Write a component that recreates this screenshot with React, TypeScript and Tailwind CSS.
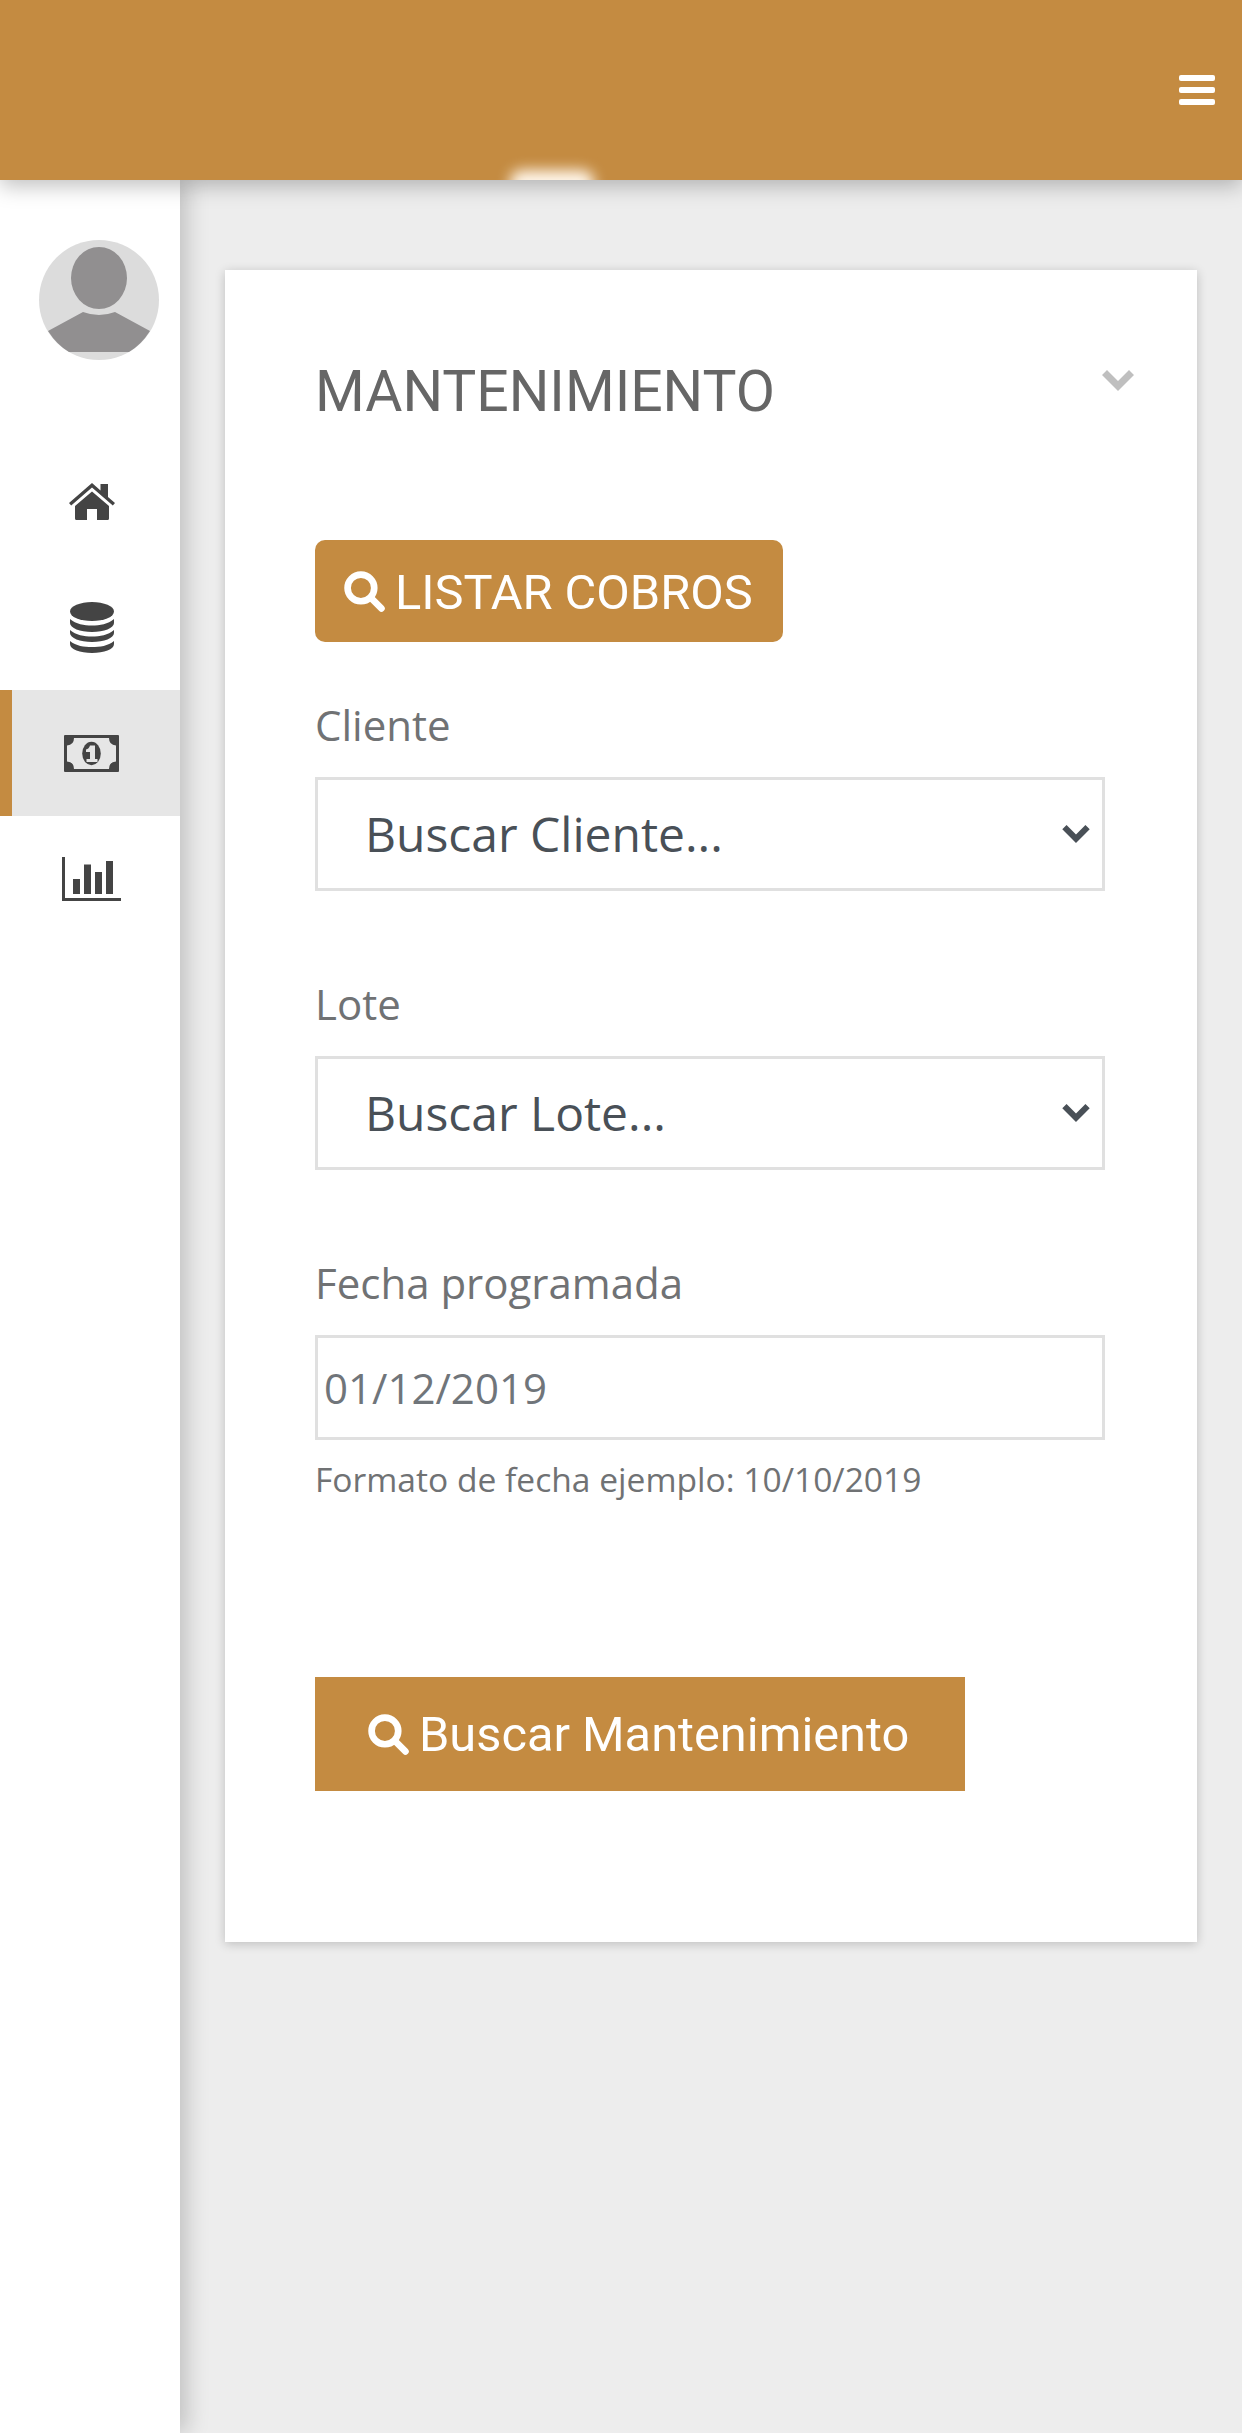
import React from "react";

function SearchIcon({ className }: { className?: string }) {
  return (
    <svg viewBox="0 0 40 40" className={className} fill="none" stroke="currentColor" strokeWidth="6.5" strokeLinecap="round">
      <circle cx="16.5" cy="16.5" r="13" />
      <path d="M26.5 26.5 L36.5 36.5" />
    </svg>
  );
}

function Chevron({ className }: { className?: string }) {
  return (
    <svg viewBox="0 0 32 21" className={className} fill="currentColor">
      <path d="M5 0 L16 11 L27 0 L32 5 L16 21 L0 5 Z" />
    </svg>
  );
}

function HomeIcon() {
  return (
    <svg viewBox="0 0 46 37" className="w-[46px] h-[37px] text-[#444444]" fill="currentColor">
      <path d="M23 0 L31.5 7.5 V1 H39 V14 L46 20 L43.8 22.5 L23 4.6 L2.2 22.5 L0 20 Z" />
      <path d="M23 8.5 L40 23 V35.5 Q40 37 38.5 37 H28 V26 H18 V37 H7.5 Q6 37 6 35.5 V23 Z" />
    </svg>
  );
}

function DbIcon() {
  return (
    <svg viewBox="0 0 44 51" className="w-[44px] h-[51px] text-[#444444]" fill="currentColor">
      <ellipse cx="22" cy="9.5" rx="22" ry="9.5" />
      <path d="M0 17 C6 22 14 23.5 22 23.5 C30 23.5 38 22 44 17 V21 C44 26 34 30 22 30 C10 30 0 26 0 21 Z" />
      <path d="M0 28 C6 33 14 34.5 22 34.5 C30 34.5 38 33 44 28 V31 C44 36 34 40 22 40 C10 40 0 36 0 31 Z" />
      <path d="M0 39 C6 44 14 45 22 45 C30 45 38 44 44 39 V42 C44 47.5 34 51 22 51 C10 51 0 47.5 0 42 Z" />
    </svg>
  );
}

function MoneyIcon() {
  return (
    <svg viewBox="0 0 55 37" className="w-[55px] h-[37px] text-[#444444]" fill="currentColor">
      <path
        fillRule="evenodd"
        d="M1 0 H54 Q55 0 55 1 V36 Q55 37 54 37 H1 Q0 37 0 36 V1 Q0 0 1 0 Z M10 3 Q10 10 3 10.5 V26.5 Q10 27 10 34 H45 Q45 27 52 26.5 V10.5 Q45 10 45 3 Z"
      />
      <ellipse cx="27.5" cy="18.5" rx="9.3" ry="11.7" />
      <path
        d="M26 10.5 H31 V24 H33.5 V27 H22.5 V24 H26 V17 H22 V14.5 Q25 14 26 10.5 Z"
        fill="#e6e6e6"
      />
    </svg>
  );
}

function ChartIcon() {
  return (
    <svg viewBox="0 0 59 44" className="w-[59px] h-[44px] text-[#444444]" fill="currentColor">
      <path d="M0 0 H3 V41 H59 V44 H0 Z" />
      <rect x="11" y="22" width="7" height="15" />
      <rect x="22" y="7.5" width="7" height="29.5" />
      <rect x="33" y="15" width="7" height="22" />
      <rect x="44" y="4" width="7" height="33" />
    </svg>
  );
}

function Avatar() {
  return (
    <svg viewBox="0 0 120 120" className="w-[120px] h-[120px]">
      <circle cx="60" cy="60" r="60" fill="#dcdcdc" />
      <ellipse cx="60" cy="38" rx="28" ry="31" fill="#918f90" />
      <path d="M44 72 Q60 78 76 72 L111 91 Q102 105 90 112 H30 Q18 105 9 91 Z" fill="#918f90" />
    </svg>
  );
}

function NavItem({ active, children }: { active?: boolean; children: React.ReactNode }) {
  return (
    <div
      className={
        active
          ? "h-[126px] flex items-center justify-center bg-[#e6e6e6] border-l-[12px] border-[#c48b41] pr-[9px]"
          : "h-[126px] flex items-center justify-center pl-[3px]"
      }
    >
      {children}
    </div>
  );
}

function SelectField({ label, placeholder }: { label: string; placeholder: string }) {
  return (
    <div className="mb-[84px]">
      <label className="block text-[42px] leading-[58px] text-[#707274] mb-[23px]">{label}</label>
      <div className="relative w-[790px]">
        <select className="appearance-none block w-full h-[114px] bg-white border-[3px] border-[#e0e0e0] pl-[47px] text-[48px] text-[#495057] outline-none rounded-none">
          <option>{placeholder}</option>
        </select>
        <Chevron className="absolute right-[15px] top-[48px] w-[28px] h-[18px] text-[#495057]" />
      </div>
    </div>
  );
}

export default function App() {
  return (
    <div className="min-h-[2433px] flex flex-col bg-[#ededed] font-['Open_Sans',sans-serif] overflow-hidden">
      <header className="relative z-20 h-[180px] shrink-0 bg-[#c48b41] shadow-[0_6px_20px_rgba(0,0,0,0.25)] flex items-center justify-end pr-[27px]">
        <div className="absolute inset-0 overflow-hidden">
          <div className="absolute left-[510px] top-[170px] w-[84px] h-[30px] rounded-[12px] bg-[#fff6ea] blur-[7px]" />
        </div>
        <div className="relative flex flex-col gap-[6px] w-[36px]">
          <span className="h-[6px] rounded-[2px] bg-white" />
          <span className="h-[6px] rounded-[2px] bg-white" />
          <span className="h-[6px] rounded-[2px] bg-white" />
        </div>
      </header>
      <div className="flex flex-1">
        <aside className="relative z-10 w-[180px] shrink-0 bg-white shadow-[6px_0_22px_rgba(0,0,0,0.2)] pt-[60px]">
          <div className="pl-[39px] mb-[78px]">
            <Avatar />
          </div>
          <nav>
            <NavItem><HomeIcon /></NavItem>
            <NavItem><DbIcon /></NavItem>
            <NavItem active><MoneyIcon /></NavItem>
            <NavItem><ChartIcon /></NavItem>
          </nav>
        </aside>
        <main className="flex-1 pl-[45px] pr-[45px] pt-[90px]">
          <section className="relative bg-white h-[1672px] pl-[90px] pt-[90px] shadow-[0_2px_10px_rgba(0,0,0,0.2)]">
            <Chevron className="absolute right-[63px] top-[100px] w-[32px] h-[21px] text-[#bfbfbf]" />
            <h1 className="font-['Roboto',sans-serif] text-[57px] leading-[64px] text-[#666666] mb-[116px]">MANTENIMIENTO</h1>
            <button className="flex items-center h-[102px] w-[468px] pl-[29px] bg-[#c48b41] rounded-[10px] text-white font-['Roboto',sans-serif] text-[48.75px] mb-[54px]">
              <SearchIcon className="w-[41px] h-[41px] mr-[10px]" />
              <span className="pt-[3px]">LISTAR COBROS</span>
            </button>
            <SelectField label="Cliente" placeholder="Buscar Cliente..." />
            <SelectField label="Lote" placeholder="Buscar Lote..." />
            <div className="mb-[173px]">
              <label className="block text-[42px] leading-[58px] text-[#707274] mb-[23px]">Fecha programada</label>
              <input
                readOnly
                value="01/12/2019"
                className="block w-[790px] h-[105px] bg-white border-[3px] border-[#e0e0e0] pl-[6px] text-[42px] text-[#70757a] outline-none"
              />
              <p className="mt-[14px] text-[33.6px] leading-[50px] text-[#707274]">Formato de fecha ejemplo: 10/10/2019</p>
            </div>
            <button className="flex items-center h-[114px] w-[650px] pl-[53px] bg-[#c48b41] text-white font-['Roboto',sans-serif] text-[48.75px]">
              <SearchIcon className="w-[41px] h-[41px] mr-[10px]" />
              <span className="pt-[2px]">Buscar Mantenimiento</span>
            </button>
          </section>
        </main>
      </div>
    </div>
  );
}
